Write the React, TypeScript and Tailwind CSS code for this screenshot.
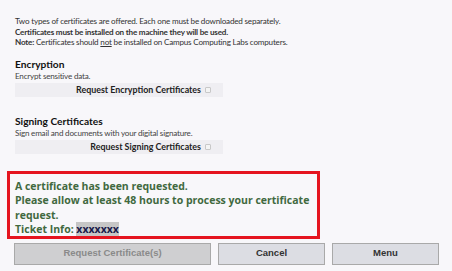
import React from "react";

export default function App() {
  const seg = { fontFamily: 'Lato, "Open Sans", sans-serif' };
  const open = { fontFamily: '"Open Sans", "Noto Sans", sans-serif' };
  const arial = { fontFamily: '"Liberation Sans", Arial, sans-serif' };
  return (
    <div className="w-[452px] h-[271px] bg-[#f8f7fa] overflow-hidden relative" style={seg}>
      <div className="pl-[15px] pt-[16px] text-[8.1px] tracking-[-0.2px] leading-[10.5px] text-[#333]">
        <div>Two types of certificates are offered. Each one must be downloaded separately.</div>
        <div className="font-bold">Certificates must be installed on the machine they will be used.</div>
        <div>
          <span className="font-bold">Note:</span> Certificates should{" "}
          <span className="underline underline-offset-[1px] decoration-[#333]">not</span> be installed on Campus Computing Labs computers.
        </div>
      </div>

      <div className="pl-[15px] pt-[9px]">
        <div className="text-[10.2px] font-bold text-[#111] leading-[14px]">Encryption</div>
        <div className="text-[8.1px] tracking-[-0.2px] text-[#444] leading-[11px]">Encrypt sensitive data.</div>
        <div className="w-[208px] h-[14px] bg-[#efeef2] flex items-center justify-end pr-[12px] mt-[1px]">
          <span className="text-[8.9px] font-bold text-[#222]">Request Encryption Certificates</span>
          <span className="w-[6px] h-[6px] border border-[#c8c8c8] bg-[#f4f4f4] ml-[4px] rounded-[1px]" />
        </div>
      </div>

      <div className="pl-[15px] pt-[17px]">
        <div className="text-[10.2px] font-bold text-[#111] leading-[14px]">Signing Certificates</div>
        <div className="text-[8.1px] tracking-[-0.2px] text-[#444] leading-[11px]">Sign email and documents with your digital signature.</div>
        <div className="w-[208px] h-[14px] bg-[#efeef2] flex items-center justify-end pr-[12px] mt-[1px]">
          <span className="text-[8.9px] font-bold text-[#222]">Request Signing Certificates</span>
          <span className="w-[6px] h-[6px] border border-[#c8c8c8] bg-[#f4f4f4] ml-[4px] rounded-[1px]" />
        </div>
      </div>

      <div
        className="ml-[7px] mt-[17px] w-[313px] h-[68px] border-[3px] border-[#e5141f] pl-[5px] pt-[5px] text-[10.5px] font-bold text-[#41693f] leading-[14.5px]"
        style={open}
      >
        <div>A certificate has been requested.</div>
        <div>Please allow at least 48 hours to process your certificate</div>
        <div>request.</div>
        <div>
          Ticket Info: <span className="bg-[#c6c6c6] text-[#1a1a4a]">xxxxxxx</span>
        </div>
      </div>

      <div className="flex gap-[7px] pl-[14px] mt-[4px]" style={arial}>
        <div className="w-[197px] h-[22px] bg-[#cfcfd1] border border-[#a9a9a9] flex items-center justify-center text-[9.5px] font-bold text-[#8a8a8a]">
          Request Certificate(s)
        </div>
        <div className="w-[107px] h-[22px] bg-[#dcdde3] border border-[#a9a9a9] flex items-center justify-center text-[9.5px] font-bold text-[#333]">
          Cancel
        </div>
        <div className="w-[107px] h-[22px] bg-[#dcdde3] border border-[#a9a9a9] flex items-center justify-center text-[9.5px] font-bold text-[#333]">
          Menu
        </div>
      </div>
    </div>
  );
}
